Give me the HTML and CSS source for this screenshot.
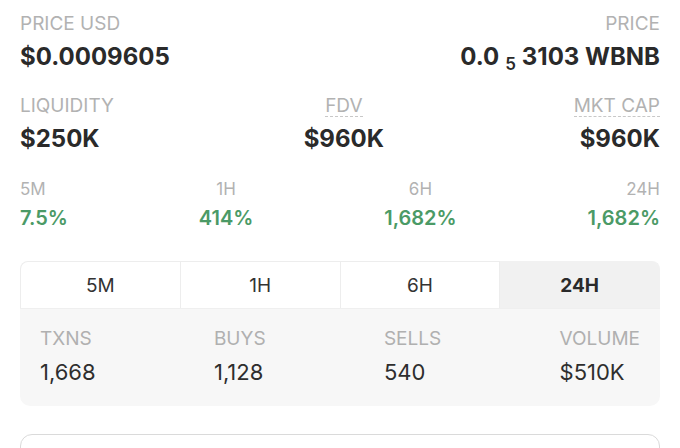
FILE: index.html
```html
<!DOCTYPE html>
<html lang="en">
<head>
<meta charset="utf-8">
<link rel="stylesheet" href="styles.css">
</head>
<body>
<div class="page">
  <div class="row row-top">
    <div class="item">
      <div class="label">PRICE USD</div>
      <div class="value">$0.0009605</div>
    </div>
    <div class="item end">
      <div class="label">PRICE</div>
      <div class="value">0.0<span class="sub">5</span>3103 WBNB</div>
    </div>
  </div>

  <div class="row row-mid">
    <div class="item">
      <div class="label">LIQUIDITY</div>
      <div class="value">$250K</div>
    </div>
    <div class="item mid">
      <div class="label"><span class="dashed">FDV</span></div>
      <div class="value">$960K</div>
    </div>
    <div class="item end">
      <div class="label"><span class="dashed">MKT CAP</span></div>
      <div class="value">$960K</div>
    </div>
  </div>

  <div class="row row-change">
    <div class="item">
      <div class="label small">5M</div>
      <div class="value green">7.5%</div>
    </div>
    <div class="item mid">
      <div class="label small">1H</div>
      <div class="value green">414%</div>
    </div>
    <div class="item mid">
      <div class="label small">6H</div>
      <div class="value green">1,682%</div>
    </div>
    <div class="item end">
      <div class="label small">24H</div>
      <div class="value green">1,682%</div>
    </div>
  </div>

  <div class="tabs">
    <div class="tab">5M</div>
    <div class="tab">1H</div>
    <div class="tab">6H</div>
    <div class="tab active">24H</div>
  </div>
  <div class="txns">
    <div class="t-item">
      <div class="t-label">TXNS</div>
      <div class="t-value">1,668</div>
    </div>
    <div class="t-item">
      <div class="t-label">BUYS</div>
      <div class="t-value">1,128</div>
    </div>
    <div class="t-item">
      <div class="t-label">SELLS</div>
      <div class="t-value">540</div>
    </div>
    <div class="t-item">
      <div class="t-label">VOLUME</div>
      <div class="t-value">$510K</div>
    </div>
  </div>

  <div class="button"></div>
</div>
</body>
</html>
```

FILE: styles.css
```css
* { box-sizing: border-box; }
html, body {
  margin: 0;
  padding: 0;
  background: #ffffff;
}
body {
  font-family: "Inter", "Noto Sans", sans-serif;
  color: #2b2b2b;
  overflow: hidden;
}
.page {
  width: 680px;
  height: 448px;
  padding: 12px 20px 0;
  display: flex;
  flex-direction: column;
}
.page > * { flex-shrink: 0; }
.row {
  display: flex;
  justify-content: space-between;
}
.item { display: flex; flex-direction: column; }
.item.mid { text-align: center; align-items: center; }
.item.end { text-align: right; align-items: flex-end; }
.label {
  font-size: 19px;
  line-height: 24px;
  color: #b2b2b2;
  font-weight: 400;
}
.label.small {
  font-size: 17px;
  line-height: 22px;
}
.dashed {
  border-bottom: 1.5px dashed #c8c8c8;
  line-height: 20px;
  display: inline-block;
}
.value {
  margin-top: 6px;
  font-size: 24px;
  line-height: 30px;
  font-weight: 700;
  color: #2a2a2a;
  white-space: nowrap;
}
.sub {
  font-size: 17px;
  position: relative;
  top: 5px;
  margin: 0 6px 0 6px;
  font-weight: 600;
}
.row-mid { margin-top: 20px; }
.row-change { margin-top: 24px; }
.row-change .value {
  margin-top: 5px;
  font-size: 20px;
  line-height: 26px;
  font-weight: 600;
}
.green { color: #4b9a66 !important; }

.tabs {
  margin-top: 30px;
  display: flex;
  height: 47px;
}
.tab {
  flex: 1;
  display: flex;
  align-items: center;
  justify-content: center;
  font-size: 19px;
  color: #333;
  border: 1px solid #ededed;
  border-bottom: none;
  border-left: none;
  background: #fff;
}
.tab:first-child {
  border-left: 1px solid #ededed;
  border-top-left-radius: 8px;
}
.tab.active {
  background: #f1f1f1;
  border-color: #f1f1f1;
  border-top-right-radius: 8px;
  font-weight: 700;
  color: #2a2a2a;
}
.txns {
  background: #f7f7f7;
  border-bottom-left-radius: 10px;
  border-bottom-right-radius: 10px;
  padding: 18px 20px 20px;
  display: flex;
  justify-content: space-between;
  border-top: 1px solid #efefef;
}
.t-label {
  font-size: 19px;
  line-height: 24px;
  color: #b0b0b0;
}
.t-value {
  margin-top: 7px;
  font-size: 22px;
  line-height: 28px;
  color: #2e2e2e;
}
.button {
  margin-top: 28px;
  height: 48px;
  border: 1.5px solid #dadada;
  border-radius: 12px;
}
```
